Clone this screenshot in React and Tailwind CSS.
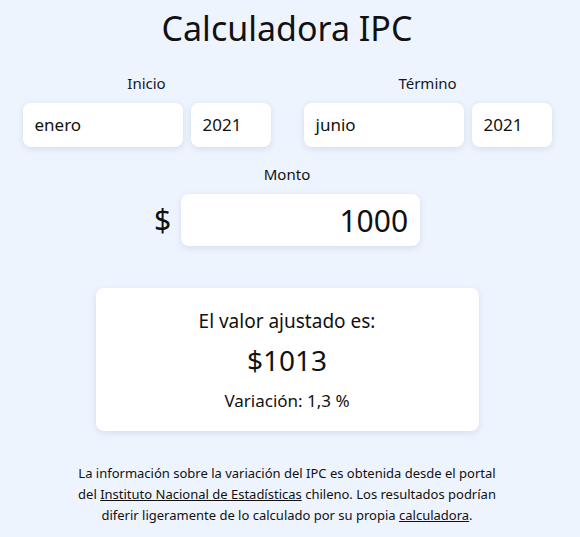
import React from 'react';

const font = { fontFamily: '"Noto Sans", "Open Sans", sans-serif' };

const Box = ({ value, width, big = false }) => (
  <div
    className={`flex items-center bg-white rounded-lg shadow-[0_2px_6px_rgba(100,120,160,0.18)] ${width} ${big ? 'h-[52px] px-3 text-[30px] justify-end' : 'h-[44px] px-3 text-[17px]'}`}
  >
    {value}
  </div>
);

const PeriodGroup = ({ label, month, year }) => (
  <div className="flex flex-col items-center">
    <div className="text-[15px] text-gray-900 h-[20px] leading-[20px] mb-[10px]">{label}</div>
    <div className="flex gap-2">
      <Box value={month} width="w-[160px]" />
      <Box value={year} width="w-[80px]" />
    </div>
  </div>
);

export default function App() {
  return (
    <div className="w-[580px] h-[537px] bg-[#eef4fe] text-[#111] flex flex-col items-center pr-[6px]" style={font}>
      <h1 className="text-[34px] leading-none mt-[11px] font-normal">Calculadora IPC</h1>

      <div className="flex gap-[33px] mt-[28px]">
        <PeriodGroup label="Inicio" month="enero" year="2021" />
        <PeriodGroup label="Término" month="junio" year="2021" />
      </div>

      <div className="flex flex-col items-center mt-[17px]">
        <div className="text-[15px] h-[20px] leading-[20px] mb-[10px]">Monto</div>
        <div className="flex items-center gap-[10px]">
          <span className="text-[30px] leading-none">$</span>
          <Box value="1000" width="w-[239px]" big />
        </div>
      </div>

      <div className="mt-[42px] w-[383px] h-[143px] bg-white rounded-lg shadow-[0_2px_6px_rgba(100,120,160,0.18)] flex flex-col items-center pt-[19px]">
        <div className="text-[19px] leading-[28px]">El valor ajustado es:</div>
        <div className="text-[28px] leading-[40px] mt-[5px]">$1013</div>
        <div className="text-[17px] leading-[24px] mt-[9px]">Variación: 1,3 %</div>
      </div>

      <p className="mt-[32px] w-[434px] text-center text-[13px] leading-[21px]">
        La información sobre la variación del IPC es obtenida desde el portal del{' '}
        <a className="underline">Instituto Nacional de Estadísticas</a> chileno. Los resultados podrían
        diferir ligeramente de lo calculado por su propia <a className="underline">calculadora</a>.
      </p>
    </div>
  );
}
